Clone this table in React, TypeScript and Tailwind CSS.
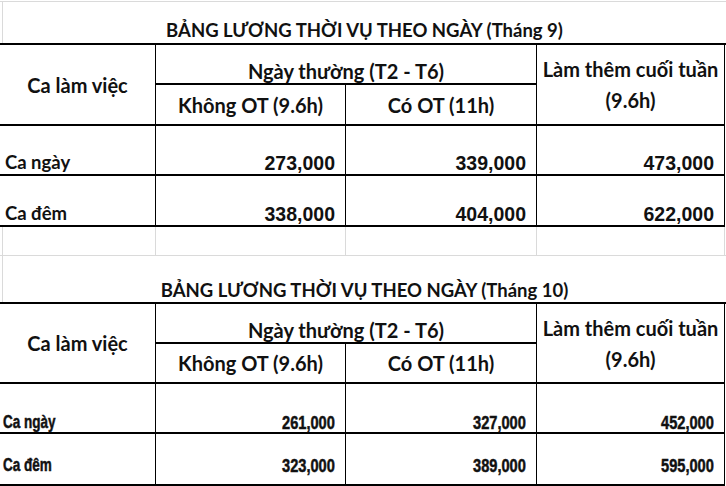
import React from 'react';

type Row = { label: string; values: [string, string, string]; pb: string; lpb: string };

type SheetTable = {
  title: string;
  titleH: string;
  titlePb: string;
  rowsH: string;
  narrow: boolean;
  rows: Row[];
};

const tables: SheetTable[] = [
  {
    title: 'BẢNG LƯƠNG THỜI VỤ THEO NGÀY (Tháng 9)',
    titleH: 'h-[41px]',
    titlePb: 'pb-[1px]',
    rowsH: 'grid-rows-[40px_41px_50px_51px]',
    narrow: false,
    rows: [
      { label: 'Ca ngày', values: ['273,000', '339,000', '473,000'], pb: 'pb-[1px]', lpb: 'pb-[0px]' },
      { label: 'Ca đêm', values: ['338,000', '404,000', '622,000'], pb: 'pb-[1px]', lpb: 'pb-[0px]' },
    ],
  },
  {
    title: 'BẢNG LƯƠNG THỜI VỤ THEO NGÀY (Tháng 10)',
    titleH: 'h-[46px]',
    titlePb: 'pb-[0px]',
    rowsH: 'grid-rows-[40px_40px_50px_52px]',
    narrow: true,
    rows: [
      { label: 'Ca ngày', values: ['261,000', '327,000', '452,000'], pb: 'pb-[0px]', lpb: 'pb-[1px]' },
      { label: 'Ca đêm', values: ['323,000', '389,000', '595,000'], pb: 'pb-[9px]', lpb: 'pb-[10px]' },
    ],
  },
];

const lato = "font-['Lato','Noto_Sans',sans-serif] font-bold text-[#111]";
const head = `${lato} text-[20px] leading-[24px]`;
const arial = "font-['Liberation_Sans',Arial,sans-serif] font-bold text-[#111]";
// no narrow face installed, so squeeze Liberation Sans Bold and thicken it a little
const narrowText = `inline-block text-[18.5px] leading-none whitespace-nowrap [-webkit-text-stroke:0.5px_#111] ${arial}`;
const cell = 'border-r border-b-2 border-black';

function Sheet({ t }: { t: SheetTable }) {
  return (
    <div>
      <div className={`${t.titleH} ${t.titlePb} flex items-end justify-center border-l border-[#dadada] ml-[2px] ${lato} text-[18.5px] leading-[24px]`}>
        {t.title}
      </div>
      <div className={`grid grid-cols-[156px_190px_191px_188px] ${t.rowsH} border-t-2 border-black`}>
        <div className={`row-span-2 flex items-center justify-center ${cell} ${head}`}>
          Ca làm việc
        </div>
        <div className={`col-span-2 flex items-end justify-center ${cell} ${head}`}>
          Ngày thường (T2 - T6)
        </div>
        <div className={`row-span-2 flex flex-col items-center justify-center pt-[1px] ${cell} ${head} leading-[31px]`}>
          <span>Làm thêm cuối tuần</span>
          <span>(9.6h)</span>
        </div>
        <div className={`flex items-center justify-center ${cell} ${head}`}>
          Không OT (9.6h)
        </div>
        <div className={`flex items-center justify-center ${cell} ${head}`}>
          Có OT (11h)
        </div>
        {t.rows.map((r) => (
          <React.Fragment key={r.label}>
            {t.narrow ? (
              <div className={`flex items-end pl-[3px] ${r.lpb} ${cell}`}>
                <span className={`origin-left [transform:scaleX(0.73)] ${narrowText}`}>{r.label}</span>
              </div>
            ) : (
              <div className={`flex items-end pl-[5px] ${r.lpb} ${cell} ${lato} text-[18.5px] leading-[24px]`}>
                {r.label}
              </div>
            )}
            {r.values.map((v, i) => (
              <div key={i} className={`flex items-end justify-end pr-[10px] ${r.pb} ${cell}`}>
                {t.narrow ? (
                  <span className={`origin-right [transform:scaleX(0.79)] ${narrowText}`}>{v}</span>
                ) : (
                  <span className={`text-[19.5px] leading-none ${arial}`}>{v}</span>
                )}
              </div>
            ))}
          </React.Fragment>
        ))}
      </div>
    </div>
  );
}

export default function App() {
  return (
    <div className="w-[726px] h-[486px] overflow-hidden bg-white">
      <div className="border-t border-[#dadada] mt-[1px]">
        <Sheet t={tables[0]} />
        <div className="grid grid-cols-[156px_190px_191px_188px] h-[29px] border-b border-[#dadada]">
          <div className="border-r border-l border-[#dadada] ml-[2px]" />
          <div className="border-r border-[#dadada]" />
          <div className="border-r border-[#dadada]" />
          <div className="border-r border-[#dadada]" />
        </div>
        <Sheet t={tables[1]} />
      </div>
    </div>
  );
}
